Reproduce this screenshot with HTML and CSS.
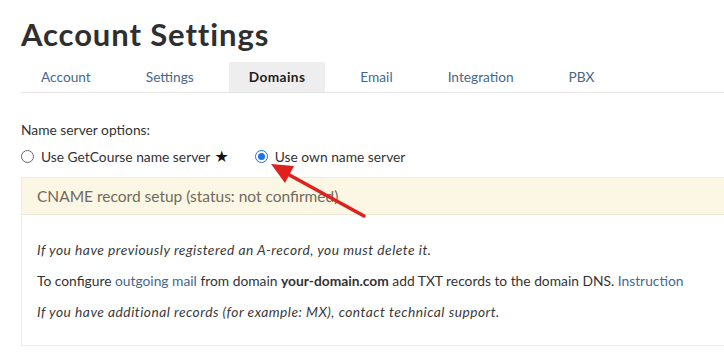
FILE: index.html
```html
<!DOCTYPE html>
<html>
<head>
<meta charset="utf-8">
<link rel="stylesheet" href="styles.css">
</head>
<body>
<div class="page">
  <h1 class="title">Account Settings</h1>
  <ul class="tabs">
    <li class="tab">Account</li>
    <li class="tab">Settings</li>
    <li class="tab active">Domains</li>
    <li class="tab">Email</li>
    <li class="tab">Integration</li>
    <li class="tab">PBX</li>
  </ul>
  <div class="options-label">Name server options:</div>
  <div class="radios">
    <label class="radio"><span class="circle"></span>Use GetCourse name server<span class="star">★</span></label>
    <label class="radio"><span class="circle checked"></span>Use own name server</label>
  </div>
  <div class="panel">
    <div class="panel-head">CNAME record setup (status: not confirmed)</div>
    <div class="panel-body">
      <p class="line italic">If you have previously registered an A-record, you must delete it.</p>
      <p class="line">To configure <a class="link">outgoing mail</a> from domain <b>your-domain.com</b> add TXT records to the domain DNS. <a class="link">Instruction</a></p>
      <p class="line italic">If you have additional records (for example: MX), contact technical support.</p>
    </div>
  </div>
</div>
<svg class="arrow" width="724" height="359" viewBox="0 0 724 359">
  <line x1="364" y1="216" x2="284" y2="172" stroke="#e0201e" stroke-width="3.5" stroke-linecap="round"/>
  <polygon points="271,164 294,166 285,183" fill="#e0201e"/>
</svg>
</body>
</html>
```
FILE: styles.css
```css
html, body {
  margin: 0;
  padding: 0;
  background: #fff;
}
body {
  font-family: Lato, "Open Sans", sans-serif;
  color: #333;
  position: relative;
  width: 724px;
  height: 359px;
  overflow: hidden;
}
.page {
  padding: 14px 0 0 21px;
}
.title {
  margin: 0;
  font-size: 31px;
  font-weight: 700;
  line-height: 40px;
  color: #2f2f2f;
  letter-spacing: 0.9px;
}
.tabs {
  list-style: none;
  margin: 8px 0 0 0;
  padding: 0;
  display: flex;
  gap: 15px;
  border-bottom: 1px solid #e6e6e6;
  height: 30px;
}
.tab {
  padding: 0 20px;
  line-height: 30px;
  font-size: 13.7px;
  color: #45688a;
}
.tab.active {
  background: #eeeeee;
  color: #1e1e1e;
  font-weight: 700;
  letter-spacing: 0.4px;
}
.options-label {
  margin-top: 28px;
  font-size: 13.8px;
  line-height: 18px;
  color: #333;
}
.radios {
  display: flex;
  gap: 26px;
  margin-top: 8px;
  height: 18px;
  align-items: center;
}
.radio {
  display: flex;
  align-items: center;
  font-size: 13.8px;
  color: #333;
}
.circle {
  width: 11px;
  height: 11px;
  border: 1px solid #666;
  border-radius: 50%;
  margin-right: 7px;
  box-sizing: content-box;
  position: relative;
}
.circle.checked {
  border-color: #1a73e8;
  background: #fff;
}
.circle.checked::after {
  content: "";
  position: absolute;
  left: 2px;
  top: 2px;
  width: 7px;
  height: 7px;
  border-radius: 50%;
  background: #1a73e8;
}
.star {
  font-size: 16px;
  margin-left: 4px;
  color: #111;
  font-family: "DejaVu Sans", sans-serif;
}
.panel {
  margin-top: 12px;
  border: 1px solid #f0ecdc;
  border-right: none;
}
.panel-head {
  background: #fcf7e4;
  border-bottom: 1px solid #ede8d6;
  height: 36px;
  line-height: 36px;
  padding-left: 15px;
  font-size: 15.5px;
  color: #6f6a60;
}
.panel-body {
  padding: 25px 15px 24px 15px;
}
.line {
  margin: 0 0 12px 0;
  font-size: 13.8px;
  line-height: 19px;
  color: #333;
}
.line:last-child {
  margin-bottom: 0;
}
.italic {
  font-style: italic;
  letter-spacing: 0.47px;
  color: #3a3a3a;
}
.link {
  color: #45688a;
}
.arrow {
  position: absolute;
  left: 0;
  top: 0;
  pointer-events: none;
}
```
